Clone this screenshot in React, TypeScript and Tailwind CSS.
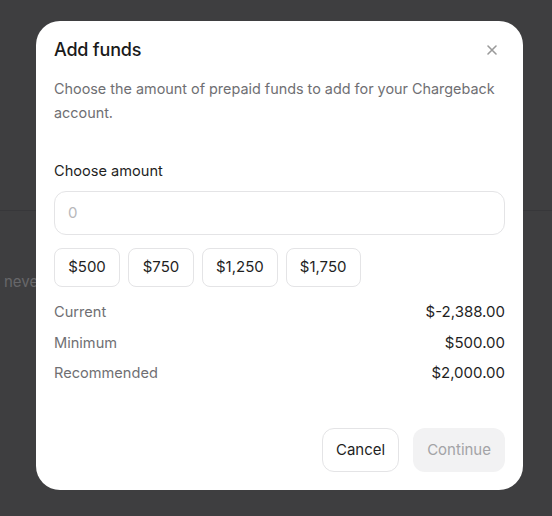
import React from "react";

export default function App() {
  const presets = ["$500", "$750", "$1,250", "$1,750"];
  const rows: [string, string][] = [
    ["Current", "$-2,388.00"],
    ["Minimum", "$500.00"],
    ["Recommended", "$2,000.00"],
  ];
  return (
    <div
      className="relative w-[552px] h-[516px] overflow-hidden bg-[#3e3e40]"
      style={{ fontFamily: "Inter, 'Noto Sans', sans-serif" }}
    >
      {/* underlying page hints behind the overlay */}
      <div className="absolute left-0 right-0 top-[210px] h-px bg-[#37373a]" />
      <div className="absolute left-[4px] top-[271px] text-[15px] leading-[22px] text-[#67676a]">
        never
      </div>

      <div className="relative pl-[36px] pt-[21px]">
        <div className="w-[487px] h-[469px] bg-white rounded-[24px] px-[18px] pt-[15px] pb-[18px] flex flex-col">
          <div className="flex items-center justify-between h-[28px]">
            <h2 className="text-[18px] leading-[28px] font-medium text-[#1a1a1a] tracking-[-0.2px]">
              Add funds
            </h2>
            <svg
              width="12"
              height="12"
              viewBox="0 0 12 12"
              className="mr-[7px]"
              fill="none"
              stroke="#9a9a9a"
              strokeWidth="1.6"
              strokeLinecap="round"
            >
              <path d="M2 2L10 10M10 2L2 10" />
            </svg>
          </div>
          <p className="mt-[13px] text-[14.4px] leading-[24px] text-[#6f6f73]">
            Choose the amount of prepaid funds to add for your Chargeback account.
          </p>

          <div className="mt-[36px] text-[14.6px] leading-[20px] text-[#1f1f1f]">
            Choose amount
          </div>
          <div className="mt-[10px] h-[44px] rounded-[12px] border border-[#e4e4e6] flex items-center px-[13px] text-[15px] text-[#b8b8bb]">
            0
          </div>
          <div className="mt-[13px] flex gap-[8px]">
            {presets.map((p) => (
              <div
                key={p}
                className="h-[39px] min-w-[66px] px-[13px] rounded-[8px] border border-[#e4e4e6] flex items-center justify-center text-[15px] text-[#1f1f1f]"
              >
                {p}
              </div>
            ))}
          </div>

          <div className="mt-[13px] flex flex-col gap-[6.5px]">
            {rows.map(([l, v]) => (
              <div key={l} className="flex justify-between text-[15px] leading-[24px]">
                <span className="text-[#6f6f73] text-[14.6px]">{l}</span>
                <span className="text-[#1f1f1f]">{v}</span>
              </div>
            ))}
          </div>

          <div className="mt-auto flex justify-end gap-[14px]">
            <div className="h-[44px] px-[13px] rounded-[12px] border border-[#e4e4e6] flex items-center text-[15px] text-[#1f1f1f]">
              Cancel
            </div>
            <div className="h-[44px] px-[14px] rounded-[12px] bg-[#f2f2f3] flex items-center text-[15px] text-[#a3a3a6]">
              Continue
            </div>
          </div>
        </div>
      </div>
    </div>
  );
}
